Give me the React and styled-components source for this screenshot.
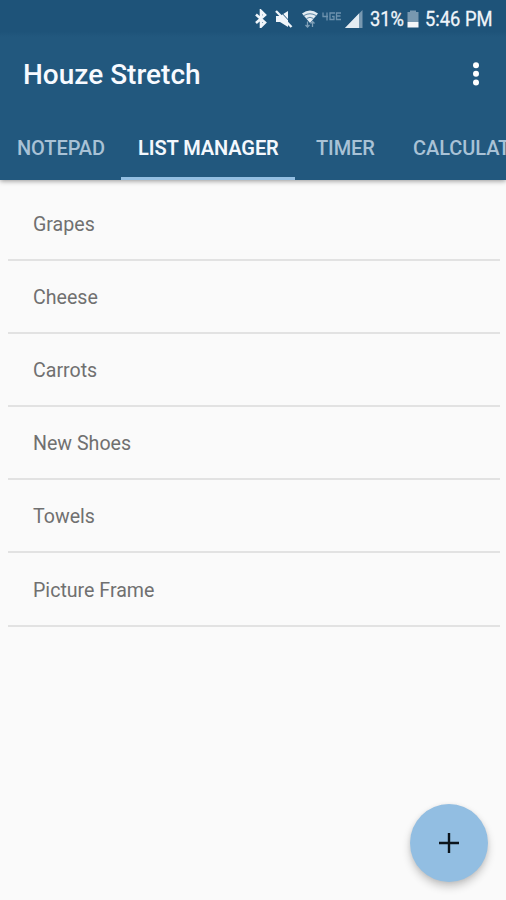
import React from "react";
import styled, { createGlobalStyle } from "styled-components";

const GlobalStyle = createGlobalStyle`
  * { box-sizing: border-box; }
  html, body { margin: 0; padding: 0; overflow: hidden; }
  body { background: #fafafa; font-family: Roboto, "Liberation Sans", sans-serif; }
`;

const Screen = styled.div`
  position: relative;
  width: 506px;
  height: 900px;
  overflow: hidden;
  display: flex;
  flex-direction: column;
  background: #fafafa;
`;

const Header = styled.header`
  height: 180px;
  flex: none;
  display: flex;
  flex-direction: column;
  background: #22587e;
  box-shadow: 0 1px 5px rgba(0, 0, 0, 0.42);
`;

const StatusBar = styled.div`
  height: 37px;
  flex: none;
  display: flex;
  align-items: center;
  justify-content: flex-end;
  padding-right: 13px;
  color: #f0f5fa;
  background: linear-gradient(#1e5379 85%, #22587e);
`;

const StatusIcon = styled.svg`
  display: block;
  flex: none;
  margin-right: ${(p) => p.$gap}px;
`;

const StatusText = styled.span`
  display: block;
  width: ${(p) => p.$width}px;
  font-size: 20.5px;
  line-height: 38px;
  white-space: nowrap;
  transform: scaleX(0.895);
  transform-origin: 0 50%;
  margin-right: ${(p) => p.$gap || 0}px;
  -webkit-text-stroke: 0.3px #f0f5fa;
`;

const AppBar = styled.div`
  height: 76px;
  flex: none;
  display: flex;
  align-items: center;
  justify-content: space-between;
  padding: 0 24px 0 23px;
`;

const Title = styled.h1`
  margin: 0;
  font-size: 28px;
  line-height: 32px;
  font-weight: 500;
  color: #f7faff;
  white-space: nowrap;
`;

const MenuButton = styled.button`
  padding: 0 0 2px;
  border: 0;
  background: none;
  display: flex;
`;

const Tabs = styled.nav`
  flex: 1;
  display: flex;
  overflow: hidden;
`;

const Tab = styled.div`
  flex: none;
  width: ${(p) => p.$width}px;
  padding-left: ${(p) => p.$inset}px;
  padding-top: 24px;
  border-bottom: 3px solid ${(p) => (p.$active ? "#94bfe2" : "transparent")};
  font-size: 20px;
  line-height: 22px;
  font-weight: ${(p) => (p.$active ? 600 : 500)};
  letter-spacing: -0.08px;
  white-space: nowrap;
  color: ${(p) => (p.$active ? "#f4f8fd" : "#a9c2d6")};
`;

const List = styled.ul`
  list-style: none;
  margin: 0;
  padding: 8px 6px 0 8px;
`;

const Item = styled.li`
  height: 73.1px;
  padding-left: 25px;
  padding-top: 2px;
  display: flex;
  align-items: center;
  border-bottom: 2px solid #e2e2e2;
  font-size: 19.6px;
  color: #707070;
`;

const Fab = styled.button`
  position: absolute;
  left: 410px;
  top: 804px;
  width: 78px;
  height: 78px;
  padding: 0;
  border: 0;
  border-radius: 50%;
  background: #92bee2;
  display: flex;
  align-items: center;
  justify-content: center;
  box-shadow: 0 5px 9px rgba(0, 0, 0, 0.2), 0 1px 4px rgba(0, 0, 0, 0.08);
`;

const Bluetooth = () => (
  <StatusIcon width="12" height="19" viewBox="0 0 12 19" $gap={8}>
    <path d="M1 5.500l9 8-4 4V2l4 4-9 8" fill="none" stroke="#f0f5fa" strokeWidth="2.600" />
  </StatusIcon>
);

const Muted = () => (
  <StatusIcon width="18" height="18" viewBox="0 0 18 18" $gap={9}>
    <path d="M1 6h4l8-5v16l-8-5H1z" fill="#f0f5fa" />
    <path d="M4 0l14 15" stroke="#1e5379" strokeWidth="1" />
    <path d="M1 1l15.500 16" stroke="#f0f5fa" strokeWidth="2.400" />
  </StatusIcon>
);

const Wifi = () => (
  <StatusIcon width="16" height="18" viewBox="0 0 16 18" $gap={4}>
    <path d="M0 3.500Q8-2.500 16 3.500L8 13z" fill="#e3ecf3" />
    <path d="M2 5.500Q8 2 14 5.500M4.500 8.500Q8 6 11.500 8.500" fill="none" stroke="#5d86a4" strokeWidth="1" />
    <path d="M5.500 11.500v5.500M3.500 15l2 2 2-2M10.500 17v-5.500M8.500 13.500l2-2 2 2" fill="none" stroke="#7f9fb7" strokeWidth="1.300" />
  </StatusIcon>
);

const Lte = () => (
  <StatusIcon width="20" height="14" viewBox="0 0.500 20 14" $gap={3}>
    <path d="M1 1v4h5M5 1v8M13 1.500H8v6.500h4V5h-2M19 1.500h-4.500v3h4M19 8h-4.500V5" fill="none" stroke="#6d92ae" strokeWidth="1.300" />
  </StatusIcon>
);

const Signal = () => (
  <StatusIcon width="18" height="18" viewBox="0 0 18 18" $gap={7}>
    <path d="M17.500 0v18H0z" fill="#7898b0" />
    <path d="M14 3.600V18H0z" fill="#e4ecf2" />
  </StatusIcon>
);

const Battery = () => (
  <StatusIcon width="12" height="18" viewBox="0 0 12 18" $gap={6}>
    <path d="M3 0.500h6v1.500h2.500v10H0.500V2H3z" fill="#7898b0" />
    <path d="M0.500 12h11v5.500h-11z" fill="#f4f7fa" />
  </StatusIcon>
);

const tabs = [
  { label: "NOTEPAD", width: 121, inset: 17 },
  { label: "LIST MANAGER", width: 174, inset: 17, active: true },
  { label: "TIMER", width: 101, inset: 21 },
  { label: "CALCULATOR", width: 150, inset: 17 },
];

const items = ["Grapes", "Cheese", "Carrots", "New Shoes", "Towels", "Picture Frame"];

export default function App() {
  return (
    <>
      <GlobalStyle />
      <Screen>
        <Header>
          <StatusBar>
            <Bluetooth />
            <Muted />
            <Wifi />
            <Lte />
            <Signal />
            <StatusText $width={33} $gap={4}>31%</StatusText>
            <Battery />
            <StatusText $width={68}>5:46 PM</StatusText>
          </StatusBar>
          <AppBar>
            <Title>Houze Stretch</Title>
            <MenuButton aria-label="More options">
              <svg width="12" height="24" viewBox="0 0 12 24" fill="#fff">
                <circle cx="6" cy="3.200" r="3" />
                <circle cx="6" cy="11.800" r="3" />
                <circle cx="6" cy="20.400" r="3" />
              </svg>
            </MenuButton>
          </AppBar>
          <Tabs>
            {tabs.map((t) => (
              <Tab key={t.label} $width={t.width} $inset={t.inset} $active={t.active}>
                {t.label}
              </Tab>
            ))}
          </Tabs>
        </Header>
        <List>
          {items.map((name) => (
            <Item key={name}>{name}</Item>
          ))}
        </List>
        <Fab aria-label="Add item">
          <svg width="20" height="20" viewBox="0 0 20 20">
            <path d="M10 0v20M0 10h20" stroke="#0c151c" strokeWidth="2.400" />
          </svg>
        </Fab>
      </Screen>
    </>
  );
}
